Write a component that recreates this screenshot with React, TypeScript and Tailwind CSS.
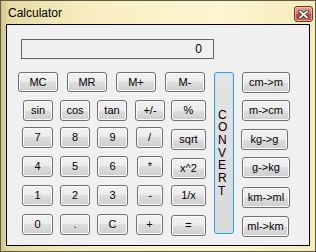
import React from "react";

const btn =
  "flex shrink-0 items-center justify-center rounded-[3px] border border-[#707070] bg-[linear-gradient(to_bottom,#f2f2f2_0%,#ebebeb_50%,#dddddd_50%,#cfcfcf_100%)] shadow-[inset_0_0_0_1px_#fcfcfc] text-[11px] leading-none text-black";

function B({ label, className }: { label: string; className: string }) {
  return <div className={`${btn} ${className}`}>{label}</div>;
}

export default function App() {
  return (
    <div
      className="flex h-[252px] w-[316px] flex-col border border-[#5c5a48] bg-[linear-gradient(to_right,#cfc58a_0px,#e6dca2_8px,#f8f0c2_30%,#fcf5d0_70%,#f5ecbb)]"
      style={{ fontFamily: '"Liberation Sans", Arial, sans-serif' }}
    >
      {/* title bar */}
      <div className="flex h-[23px] shrink-0 items-start justify-between">
        <div className="pl-[7px] pt-[5px] text-[12px] leading-[14px] text-black">Calculator</div>
        <div className="mr-[2px] mt-[5px] flex h-[16px] w-[19px] items-center justify-center rounded-[3px] border border-[#7a3428] bg-[linear-gradient(to_bottom,#e6a898_0%,#d57a66_45%,#c4442f_55%,#d06a55_100%)] shadow-[inset_0_0_0_1px_rgba(255,220,210,0.5)]">
          <svg width="11" height="9" viewBox="0 0 11 9">
            <path d="M2 1.5 L9 7.5 M9 1.5 L2 7.5" stroke="#3a3a3a" strokeWidth="3.6" strokeLinecap="square" />
            <path d="M2 1.5 L9 7.5 M9 1.5 L2 7.5" stroke="#ffffff" strokeWidth="1.8" strokeLinecap="square" />
          </svg>
        </div>
      </div>
      {/* frame + client */}
      <div className="flex flex-1 px-[5px] pb-[5px]">
        <div className="flex flex-1 flex-col border border-black bg-[#f0f0f0]">
          {/* display */}
          <div className="ml-[14px] mt-[14px] flex h-[20px] w-[193px] items-center justify-end border border-[#646464] bg-[#f0f0f0] pr-[11px] text-[12px] leading-none text-black">
            0
          </div>
          {/* main area */}
          <div className="mt-[13px] flex items-start">
            {/* left block */}
            <div className="ml-[11px] flex w-[188px] shrink-0 flex-col">
              <div className="flex h-[20px]">
                <B label="MC" className="h-[20px] w-[40px]" />
                <B label="MR" className="ml-[9px] h-[20px] w-[40px]" />
                <B label="M+" className="ml-[9px] h-[20px] w-[40px]" />
                <B label="M-" className="ml-[9px] h-[20px] w-[40px]" />
              </div>
              <div className="mt-[8px] flex h-[21px] items-start">
                <B label="sin" className="ml-[5px] h-[21px] w-[30px]" />
                <B label="cos" className="ml-[7px] h-[21px] w-[30px]" />
                <B label="tan" className="ml-[7px] h-[21px] w-[30px]" />
                <B label="+/-" className="ml-[8px] h-[21px] w-[30px]" />
                <B label="%" className="ml-[6px] h-[21px] w-[35px]" />
              </div>
              <div className="mt-[6px] flex h-[21px] items-start">
                <B label="7" className="ml-[4px] h-[21px] w-[31px]" />
                <B label="8" className="ml-[7px] h-[21px] w-[30px]" />
                <B label="9" className="ml-[7px] h-[21px] w-[31px]" />
                <B label="/" className="ml-[8px] h-[21px] w-[27px]" />
                <B label="sqrt" className="ml-[8px] mt-[2px] h-[21px] w-[35px]" />
              </div>
              <div className="mt-[8px] flex h-[21px] items-start">
                <B label="4" className="ml-[4px] h-[21px] w-[31px]" />
                <B label="5" className="ml-[7px] h-[21px] w-[30px]" />
                <B label="6" className="ml-[7px] h-[21px] w-[31px]" />
                <B label="*" className="ml-[9px] h-[21px] w-[26px]" />
                <B label="x^2" className="ml-[8px] mt-[2px] h-[21px] w-[35px]" />
              </div>
              <div className="mt-[8px] flex h-[21px] items-start">
                <B label="1" className="ml-[4px] h-[21px] w-[31px]" />
                <B label="2" className="ml-[7px] h-[21px] w-[30px]" />
                <B label="3" className="ml-[7px] h-[21px] w-[31px]" />
                <B label="-" className="ml-[9px] h-[21px] w-[26px]" />
                <B label="1/x" className="ml-[8px] h-[21px] w-[35px]" />
              </div>
              <div className="mt-[8px] flex h-[21px] items-start">
                <B label="0" className="ml-[4px] h-[21px] w-[31px]" />
                <B label="." className="ml-[7px] h-[21px] w-[30px]" />
                <B label="C" className="ml-[7px] h-[21px] w-[31px]" />
                <B label="+" className="ml-[8px] h-[21px] w-[27px]" />
                <B label="=" className="ml-[8px] mt-[1px] h-[21px] w-[35px]" />
              </div>
            </div>
            {/* convert */}
            <div className="ml-[8px] flex h-[162px] w-[20px] shrink-0 flex-col items-start justify-center rounded-[3px] border border-[#3c9ad6] bg-[linear-gradient(to_bottom,#e4e4e4,#d8d8d8)] pl-[3px] text-[12px] leading-[12.7px] text-black shadow-[inset_0_0_0_1px_#bfe6f8]">
              {"CONVERT".split("").map((c, i) => (
                <span key={i}>{c}</span>
              ))}
            </div>
            {/* right column */}
            <div className="ml-[8px] flex flex-col">
              <B label="cm->m" className="h-[21px] w-[48px]" />
              <B label="m->cm" className="mt-[7px] h-[21px] w-[48px]" />
              <B label="kg->g" className="-ml-px mt-[8px] h-[21px] w-[47px]" />
              <B label="g->kg" className="mt-[7px] h-[21px] w-[48px]" />
              <B label="km->ml" className="mt-[9px] h-[21px] w-[48px]" />
              <B label="ml->km" className="mt-[8px] h-[21px] w-[47px]" />
            </div>
          </div>
        </div>
      </div>
    </div>
  );
}
